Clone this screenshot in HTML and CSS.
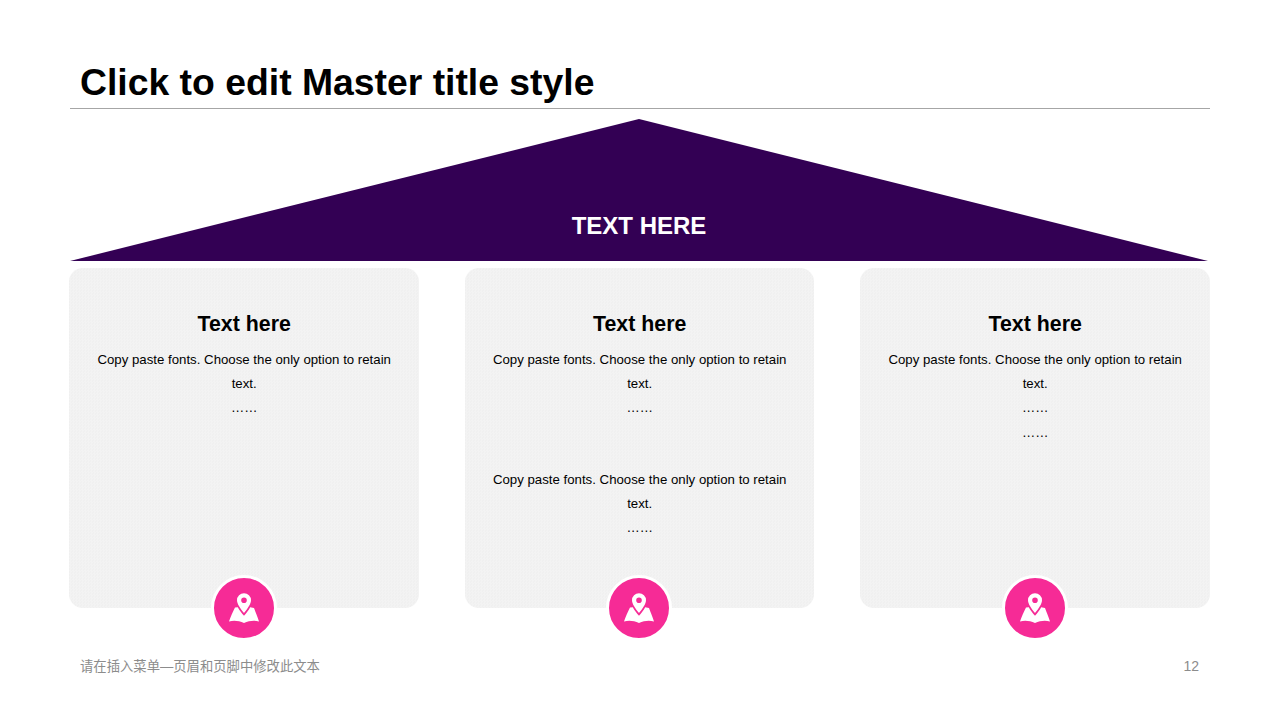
FILE: index.html
```html
<!DOCTYPE html>
<html lang="en">
<head>
<meta charset="utf-8">
<title>Slide</title>
<link rel="stylesheet" href="styles.css">
</head>
<body>
<main class="slide">
  <header class="head"><h1 class="title">Click to edit Master title style</h1></header>
  <section class="roof"><span class="roof-text">TEXT HERE</span></section>
  <section class="cards">
    <article class="card">
      <h2 class="card-title">Text here</h2>
      <p class="line">Copy paste fonts. Choose the only option to retain</p>
      <p class="line">text.</p>
      <p class="line">……</p>
      <span class="pin"><svg viewBox="0 0 32 32" class="pin-icon"><path fill="#fff" fill-rule="evenodd" d="M16 1.200a7 7 0 0 1 7 7c0 3.800-3.800 8.800-7 12.800-3.200-4-7-9-7-12.800a7 7 0 0 1 7-7ZM16 5.400a2.800 2.800 0 1 0 0 5.600 2.800 2.800 0 0 0 0-5.600Z"/><path fill="#fff" d="M7 15.500 9.800 15.300C11.300 18.200 13.600 21.200 16 23.800 18.400 21.200 20.700 18.200 22.200 15.300L26 16C27.500 20 29.500 25 31 29.500 26 28 21 28.800 16 31 11 28.800 6 28 1 29.500 2.500 25 5 19.500 7 15.500Z"/></svg></span>
    </article>
    <article class="card">
      <h2 class="card-title">Text here</h2>
      <p class="line">Copy paste fonts. Choose the only option to retain</p>
      <p class="line">text.</p>
      <p class="line">……</p>
      <p class="line line-gap">Copy paste fonts. Choose the only option to retain</p>
      <p class="line">text.</p>
      <p class="line">……</p>
      <span class="pin"><svg viewBox="0 0 32 32" class="pin-icon"><path fill="#fff" fill-rule="evenodd" d="M16 1.200a7 7 0 0 1 7 7c0 3.800-3.800 8.800-7 12.800-3.200-4-7-9-7-12.800a7 7 0 0 1 7-7ZM16 5.400a2.800 2.800 0 1 0 0 5.600 2.800 2.800 0 0 0 0-5.600Z"/><path fill="#fff" d="M7 15.500 9.800 15.300C11.300 18.200 13.600 21.200 16 23.800 18.400 21.200 20.700 18.200 22.200 15.300L26 16C27.500 20 29.500 25 31 29.500 26 28 21 28.800 16 31 11 28.800 6 28 1 29.500 2.500 25 5 19.500 7 15.500Z"/></svg></span>
    </article>
    <article class="card">
      <h2 class="card-title">Text here</h2>
      <p class="line">Copy paste fonts. Choose the only option to retain</p>
      <p class="line">text.</p>
      <p class="line">……</p>
      <p class="line">……</p>
      <span class="pin"><svg viewBox="0 0 32 32" class="pin-icon"><path fill="#fff" fill-rule="evenodd" d="M16 1.200a7 7 0 0 1 7 7c0 3.800-3.800 8.800-7 12.800-3.200-4-7-9-7-12.800a7 7 0 0 1 7-7ZM16 5.400a2.800 2.800 0 1 0 0 5.600 2.800 2.800 0 0 0 0-5.600Z"/><path fill="#fff" d="M7 15.500 9.800 15.300C11.300 18.200 13.600 21.200 16 23.800 18.400 21.200 20.700 18.200 22.200 15.300L26 16C27.500 20 29.500 25 31 29.500 26 28 21 28.800 16 31 11 28.800 6 28 1 29.500 2.500 25 5 19.500 7 15.500Z"/></svg></span>
    </article>
  </section>
  <footer class="foot"><span>请在插入菜单—页眉和页脚中修改此文本</span><span class="page-no">12</span></footer>
</main>
</body>
</html>
```
FILE: styles.css
```css
* { box-sizing: border-box; }
html, body { margin: 0; padding: 0; background: #fff; }
body { font-family: "Liberation Sans", "Noto Sans CJK SC", sans-serif; color: #000; }
.slide { width: 1280px; height: 720px; overflow: hidden; padding: 0 70px 0 69px; display: flex; flex-direction: column; }
.head { margin: 0 0 0 1px; height: 109px; padding: 60px 0 0 10px; border-bottom: 1px solid #a6a6a6; }
.title { margin: 0; font-size: 37.33px; line-height: 44px; font-weight: 700; }
.roof { margin: 10px 2px 0 1px; height: 142px; background: #330054; clip-path: polygon(50% 0, 100% 100%, 0 100%); display: flex; align-items: flex-end; justify-content: center; padding-bottom: 20px; }
.roof-text { color: #fff; font-size: 24px; line-height: 30px; font-weight: 700; }
.cards { margin-top: 7px; display: grid; grid-template-columns: repeat(3, 349.6px); justify-content: space-between; padding-left: .4px; }
.card { position: relative; height: 340px; border-radius: 14px; background-color: #f2f2f2; background-image: repeating-conic-gradient(#f3f3f3 0 25%, #f0f0f0 0 50%); background-size: 3px 3px; padding: 42px 0 0; text-align: center; }
.card-title { margin: 0 0 10px; font-size: 21.33px; line-height: 28px; font-weight: 700; }
.line { margin: 0; font-size: 13.24px; line-height: 24.2px; }
.line-gap { margin-top: 47px; }
.pin { position: absolute; left: calc(50% - 33.5px); bottom: -33px; width: 66px; height: 66px; border-radius: 50%; background: #f62b96; border: 3px solid #fff; display: flex; align-items: center; justify-content: center; }
.pin-icon { width: 32px; height: 32px; display: block; }
.foot { margin-top: 48.5px; padding: 0 11px; display: flex; justify-content: space-between; align-items: flex-start; font-size: 13.33px; line-height: 20px; color: #8c8c8c; }
.page-no { font-size: 14px; line-height: 18px; }
```
